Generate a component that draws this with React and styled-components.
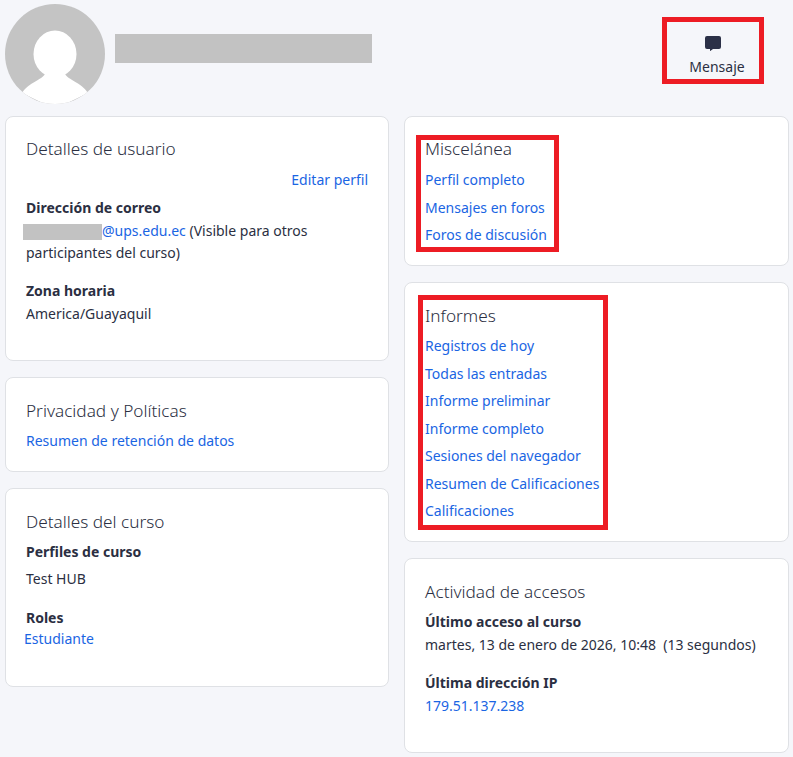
import React from "react";
import styled, { createGlobalStyle } from "styled-components";

const GlobalStyle = createGlobalStyle`
  html, body {
    margin: 0;
    background: #f5f6fa;
    color: #2b2f42;
    font-family: "Noto Sans", "Open Sans", sans-serif;
    font-size: 14px;
  }
`;

const Page = styled.div`
  width: 793px;
  height: 757px;
  overflow: hidden;
`;

const Header = styled.header`
  display: flex;
  align-items: flex-start;
  padding: 4px 29px 0 5px;
  height: 116px;
  box-sizing: border-box;
`;

const Avatar = styled.svg`
  width: 100px;
  height: 100px;
  flex: none;
`;

const NameBar = styled.div`
  width: 257px;
  height: 29px;
  margin: 30px 0 0 10px;
  background: #c2c2c2;
`;

const MessageButton = styled.a`
  margin: 13px 0 0 auto;
  width: 102px;
  height: 67px;
  box-sizing: border-box;
  border: 5px solid #ed1c24;
  display: flex;
  flex-direction: column;
  align-items: center;
  padding: 14px 0 0 8px;
  color: #2b2f42;
  svg {
    width: 16px;
    height: 15px;
    margin: 0 8px 6px 0;
  }
`;

const Columns = styled.div`
  display: grid;
  grid-template-columns: 384px 385px;
  column-gap: 15px;
  padding-left: 5px;
`;

const Column = styled.div`
  display: flex;
  flex-direction: column;
  gap: 16px;
`;

const Card = styled.section`
  box-sizing: border-box;
  height: ${(p) => p.$h}px;
  padding: 20px;
  background: #fff;
  border: 1px solid #dfe1e5;
  border-radius: 8px;
`;

const Title = styled.h3`
  margin: ${(p) => p.$top || 0}px 0 ${(p) => (p.$after || 0) + 2}px;
  font-size: 17.2px;
  font-weight: 300;
  line-height: 23px;
`;

const Links = styled.div`
  position: relative;
  display: flex;
  flex-direction: column;
  padding-top: 4px;
`;

const ListLink = styled.a`
  color: #1a65e3;
  line-height: 27.5px;
`;

const Highlight = styled.div`
  position: absolute;
  left: ${(p) => p.$x}px;
  top: ${(p) => p.$y}px;
  width: ${(p) => p.$w}px;
  height: ${(p) => p.$ht}px;
  box-sizing: border-box;
  border: 5px solid #ed1c24;
  pointer-events: none;
`;

const CardBody = styled.div`
  position: relative;
`;

const EditLink = styled.a`
  display: block;
  text-align: right;
  color: #1a65e3;
  line-height: 27px;
  margin: 6px 0 4px;
`;

const Label = styled.div`
  font-weight: 700;
  line-height: 22.5px;
  margin-top: ${(p) => p.$top || 0}px;
`;

const Value = styled.div`
  line-height: 22.5px;
  margin-top: ${(p) => p.$top || 0}px;
`;

const Blue = styled.a`
  color: #1a65e3;
`;

const Redacted = styled.span`
  display: inline-block;
  width: 79px;
  height: 16px;
  margin-left: -3px;
  background: #c2c2c2;
  vertical-align: -4px;
`;

const RoleLink = styled.a`
  display: block;
  color: #1a65e3;
  line-height: 18px;
  margin-left: -2px;
`;

const DateText = styled.span`
  white-space: pre;
`;

const ChatIcon = () => (
  <svg viewBox="0 0 16 15">
    <path fill="#2b3047" d="M2 0h12a2 2 0 0 1 2 2v9a2 2 0 0 1-2 2H8l-3 2.200V13H2a2 2 0 0 1-2-2V2a2 2 0 0 1 2-2z" />
  </svg>
);

const App = () => (
  <Page>
    <GlobalStyle />
    <Header>
      <Avatar viewBox="0 0 100 100">
        <defs>
          <clipPath id="round">
            <circle cx="50" cy="50" r="50" />
          </clipPath>
        </defs>
        <g clipPath="url(#round)">
          <rect width="100" height="100" fill="#c4c4c4" />
          <ellipse cx="50" cy="50" rx="21.500" ry="23.500" fill="#fff" />
          <path fill="#fff" d="M40 70 C37 76 24 78 17 89 L50 105 L83 89 C76 78 63 76 60 70 Z" />
        </g>
      </Avatar>
      <NameBar />
      <MessageButton>
        <ChatIcon />
        Mensaje
      </MessageButton>
    </Header>
    <Columns>
      <Column>
        <Card $h={245}>
          <Title>Detalles de usuario</Title>
          <EditLink>Editar perfil</EditLink>
          <Label>Dirección de correo</Label>
          <Value>
            <Redacted />
            <Blue>@ups.edu.ec</Blue> (Visible para otros participantes del curso)
          </Value>
          <Label $top={15}>Zona horaria</Label>
          <Value $top={1}>America/Guayaquil</Value>
        </Card>
        <Card $h={95}>
          <Title $top={1} $after={-1}>Privacidad y Políticas</Title>
          <Links>
            <ListLink>Resumen de retención de datos</ListLink>
          </Links>
        </Card>
        <Card $h={199}>
          <Title $top={1}>Detalles del curso</Title>
          <Label $top={8}>Perfiles de curso</Label>
          <Value $top={4}>Test HUB</Value>
          <Label $top={17}>Roles</Label>
          <RoleLink>Estudiante</RoleLink>
        </Card>
      </Column>
      <Column>
        <Card $h={150}>
          <CardBody>
            <Title>Miscelánea</Title>
            <Links>
              <ListLink>Perfil completo</ListLink>
              <ListLink>Mensajes en foros</ListLink>
              <ListLink>Foros de discusión</ListLink>
            </Links>
            <Highlight $x={-9} $y={-2} $w={143} $ht={117} />
          </CardBody>
        </Card>
        <Card $h={260}>
          <CardBody>
            <Title $top={1} $after={-1}>Informes</Title>
            <Links>
              <ListLink>Registros de hoy</ListLink>
              <ListLink>Todas las entradas</ListLink>
              <ListLink>Informe preliminar</ListLink>
              <ListLink>Informe completo</ListLink>
              <ListLink>Sesiones del navegador</ListLink>
              <ListLink>Resumen de Calificaciones</ListLink>
              <ListLink>Calificaciones</ListLink>
            </Links>
            <Highlight $x={-7} $y={-9} $w={190} $ht={235} />
          </CardBody>
        </Card>
        <Card $h={195}>
          <Title $top={1}>Actividad de accesos</Title>
          <Label $top={8}>Último acceso al curso</Label>
          <Value>
            <DateText>martes, 13 de enero de 2026, 10:48  (13 segundos)</DateText>
          </Value>
          <Label $top={16}>Última dirección IP</Label>
          <Value>
            <Blue>179.51.137.238</Blue>
          </Value>
        </Card>
      </Column>
    </Columns>
  </Page>
);

export default App;
